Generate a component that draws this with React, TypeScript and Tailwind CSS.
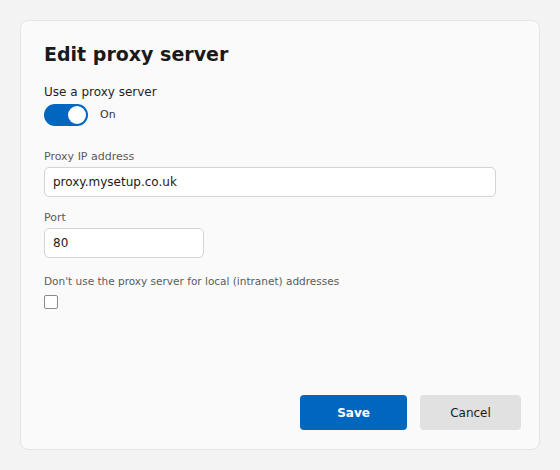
export default function App() {
  return (
    <div
      className="w-[560px] h-[470px] bg-[#f3f3f3] p-[20px]"
      style={{ fontFamily: '"DejaVu Sans", Verdana, sans-serif' }}
    >
      <div className="w-[520px] h-[430px] bg-[#fafafa] border border-[#e5e5e5] rounded-[8px] pt-[21px] pl-[23px] pr-[18px] pb-[19px] flex flex-col">
        <h1 className="text-[19px] leading-[24px] font-bold text-[#1a1a1a]">Edit proxy server</h1>

        <div className="mt-[18px] text-[12px] leading-[16px] text-[#1f1f1f]">Use a proxy server</div>
        <div className="mt-[4px] flex items-center gap-[12px]">
          <div className="w-[44px] h-[22px] rounded-full bg-[#0067c0] flex items-center justify-end pr-[2px]">
            <div className="w-[18px] h-[18px] rounded-full bg-white" />
          </div>
          <span className="text-[11px] leading-[14px] text-[#333]">On</span>
        </div>

        <div className="mt-[24px] text-[11px] leading-[14px] text-[#5a5a5a]">Proxy IP address</div>
        <div className="mt-[3px] w-[452px] h-[30px] bg-white border border-[#d4d4d4] rounded-[5px] px-[8px] flex items-center text-[12px] text-[#1a1a1a]">
          proxy.mysetup.co.uk
        </div>

        <div className="mt-[14px] text-[11px] leading-[14px] text-[#5a5a5a]">Port</div>
        <div className="mt-[3px] w-[160px] h-[30px] bg-white border border-[#d4d4d4] rounded-[5px] px-[8px] flex items-center text-[12px] text-[#1a1a1a]">
          80
        </div>

        <div className="mt-[16px] text-[10.5px] leading-[14px] text-[#5a5a5a]">
          Don't use the proxy server for local (intranet) addresses
        </div>
        <div className="mt-[7px] w-[14px] h-[14px] border border-[#8a8a8a] rounded-[2px] bg-white" />

        <div className="mt-auto flex justify-end gap-[13px]">
          <button className="w-[107px] h-[35px] rounded-[4px] bg-[#0067c0] text-white text-[12px] font-bold">
            Save
          </button>
          <button className="w-[101px] h-[35px] rounded-[4px] bg-[#e1e1e1] text-[#1a1a1a] text-[12px]">
            Cancel
          </button>
        </div>
      </div>
    </div>
  );
}
